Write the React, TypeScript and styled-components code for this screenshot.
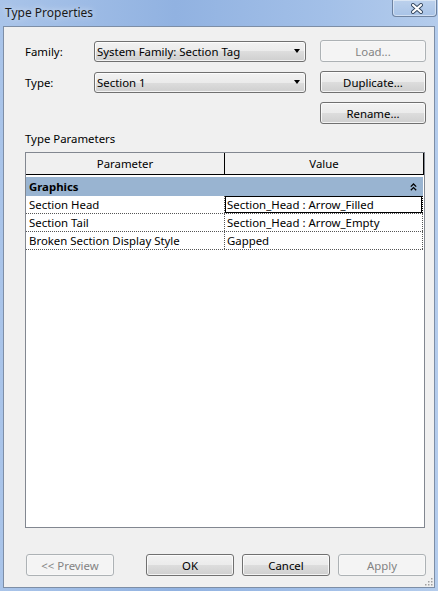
import React from "react";
import styled, { createGlobalStyle } from "styled-components";

const Global = createGlobalStyle`
  html, body { margin: 0; padding: 0; }
  body {
    width: 438px; height: 591px; overflow: hidden;
    font-family: "Noto Sans", "Open Sans", sans-serif;
    font-size: 11.4px; color: #000;
  }
  * { box-sizing: border-box; }
`;

const Window = styled.div`
  width: 438px; height: 591px;
  display: flex; flex-direction: column;
  background: linear-gradient(90deg, #a9c4e9 0%, #91b2e1 40%, #a3c0e8 75%, #b4ccec 100%);
`;

const TitleBar = styled.div`
  height: 26px; flex: none;
  display: flex; align-items: flex-start;
`;

const Title = styled.div`
  padding: 5px 0 0 5px;
  font-size: 12px; line-height: 16px; color: #1a1a1a;
  text-shadow: 0 0 6px rgba(255, 255, 255, 0.8);
`;

const CloseButton = styled.div`
  margin-left: auto; margin-right: 1px;
  width: 45px; height: 17px;
  border: 1px solid rgba(50, 70, 100, 0.55); border-top: none;
  border-radius: 0 0 4px 4px;
  box-shadow: inset 0 0 0 1px rgba(255, 255, 255, 0.45);
  background: linear-gradient(#bcd1ec, #a8c3e7);
  display: flex; align-items: center; justify-content: center;
  padding-left: 4px;
`;

const Body = styled.div`
  flex: 1;
  margin: 0 3px 3px 3px;
  border: 1px solid #7d8ea6;
  background: #f0f0f0;
  display: flex; flex-direction: column;
  padding: 13px 8px 11px 21px;
  position: relative;
`;

const FieldRow = styled.div<{ $gap?: number }>`
  display: flex; align-items: center;
  height: 22px;
  margin-top: ${(p) => p.$gap ?? 0}px;
`;

const Label = styled.div`
  width: 69px; flex: none;
`;

const Select = styled.div`
  width: 212px; height: 21px; flex: none;
  border: 1px solid #707070; border-radius: 3px;
  background: linear-gradient(#f2f2f2 0%, #ebebeb 50%, #dddddd 50%, #cfcfcf 100%);
  box-shadow: inset 0 0 0 1px rgba(255, 255, 255, 0.75);
  display: flex; align-items: center;
  padding: 0 5px 0 2px;
`;

const SelectText = styled.span`
  flex: 1; white-space: nowrap;
`;

const Arrow = styled.span`
  width: 0; height: 0;
  border-left: 3.5px solid transparent;
  border-right: 3.5px solid transparent;
  border-top: 4px solid #000;
`;

const Button = styled.div<{ $disabled?: boolean; $w?: number; $ml?: string }>`
  width: ${(p) => p.$w ?? 106}px; height: 22px; flex: none;
  margin-left: ${(p) => p.$ml ?? "0"};
  border-radius: 3px;
  display: flex; align-items: center; justify-content: center;
  border: 1px solid ${(p) => (p.$disabled ? "#adb2b5" : "#707070")};
  color: ${(p) => (p.$disabled ? "#838383" : "#000")};
  background: ${(p) =>
    p.$disabled
      ? "#f4f4f4"
      : "linear-gradient(#f2f2f2 0%, #ebebeb 50%, #dddddd 50%, #cfcfcf 100%)"};
  box-shadow: inset 0 0 0 1px ${(p) => (p.$disabled ? "#f8f8f8" : "rgba(255,255,255,0.75)")};
`;

const SectionLabel = styled.div`
  margin-top: 7px; margin-bottom: 5px;
  line-height: 16px;
`;

const Grid = styled.div`
  flex: 1;
  margin-right: 1px;
  border: 1px solid #828790;
  background: #fff;
  display: flex; flex-direction: column;
`;

const HeaderRow = styled.div`
  display: flex; height: 22px;
  background: #f0f0f0;
  border-bottom: 1px solid #000;
`;

const HeaderCell = styled.div<{ $w?: number }>`
  ${(p) => (p.$w ? `width: ${p.$w}px; flex: none;` : "flex: 1;")}
  border-right: 1px solid #000;
  display: flex; align-items: center; justify-content: center;
`;

const GroupRow = styled.div`
  margin-top: 2px; margin-right: 1px;
  height: 19px;
  background: #99b4d1;
  display: flex; align-items: center;
  padding: 0 6px 0 3px;
  font-weight: bold;
`;

const GroupName = styled.span`
  flex: 1;
`;

const DataRow = styled.div`
  display: flex; height: 18px;
  margin-right: 1px;
  border-bottom: 1px dotted #555;
`;

const ParamCell = styled.div`
  width: 199px; flex: none;
  border-right: 1px dotted #555;
  padding-left: 3px;
  display: flex; align-items: center;
  white-space: nowrap;
`;

const ValueCell = styled.div<{ $selected?: boolean }>`
  flex: 1;
  border-right: 1px dotted #555;
  padding-left: 2px;
  display: flex; align-items: center;
  white-space: nowrap;
  ${(p) => (p.$selected ? "box-shadow: inset 0 0 0 1px #000; border-right-color: #000;" : "")}
`;

const Footer = styled.div`
  display: flex; gap: 8px;
  margin-top: 26px;
`;

const Grip = styled.svg`
  position: absolute; right: 1px; bottom: 1px;
`;

const rows = [
  { name: "Section Head", value: "Section_Head : Arrow_Filled", selected: true },
  { name: "Section Tail", value: "Section_Head : Arrow_Empty" },
  { name: "Broken Section Display Style", value: "Gapped" },
];

const CloseIcon = () => (
  <svg width="12" height="11" viewBox="0 0 12 11">
    <path d="M2 2 L10 9 M10 2 L2 9" stroke="#34465e" strokeWidth="4" strokeLinecap="round" fill="none" />
    <path d="M2 2 L10 9 M10 2 L2 9" stroke="#ffffff" strokeWidth="2.2" strokeLinecap="round" fill="none" />
  </svg>
);

const CollapseIcon = () => (
  <svg width="7" height="8" viewBox="0 0 7 8">
    <path d="M0.8 3.6 L3.5 1 L6.2 3.6 M0.8 7.2 L3.5 4.6 L6.2 7.2" stroke="#000" strokeWidth="1.3" fill="none" />
  </svg>
);

export default function App() {
  return (
    <>
      <Global />
      <Window>
        <TitleBar>
          <Title>Type Properties</Title>
          <CloseButton>
            <CloseIcon />
          </CloseButton>
        </TitleBar>
        <Body>
          <FieldRow>
            <Label>Family:</Label>
            <Select>
              <SelectText>System Family: Section Tag</SelectText>
              <Arrow />
            </Select>
            <Button $disabled $ml="14px">Load...</Button>
          </FieldRow>
          <FieldRow $gap={9}>
            <Label>Type:</Label>
            <Select>
              <SelectText>Section 1</SelectText>
              <Arrow />
            </Select>
            <Button $ml="14px">Duplicate...</Button>
          </FieldRow>
          <FieldRow $gap={9}>
            <Button $ml="295px">Rename...</Button>
          </FieldRow>
          <SectionLabel>Type Parameters</SectionLabel>
          <Grid>
            <HeaderRow>
              <HeaderCell $w={199}>Parameter</HeaderCell>
              <HeaderCell>Value</HeaderCell>
            </HeaderRow>
            <GroupRow>
              <GroupName>Graphics</GroupName>
              <CollapseIcon />
            </GroupRow>
            {rows.map((r) => (
              <DataRow key={r.name}>
                <ParamCell>{r.name}</ParamCell>
                <ValueCell $selected={r.selected}>{r.value}</ValueCell>
              </DataRow>
            ))}
          </Grid>
          <Footer>
            <Button $disabled $w={88} $ml="1px">&lt;&lt; Preview</Button>
            <Button $w={88} $ml="auto">OK</Button>
            <Button $w={88}>Cancel</Button>
            <Button $disabled $w={88}>Apply</Button>
          </Footer>
          <Grip width="10" height="10" viewBox="0 0 10 10">
            {[
              [8, 2], [8, 5], [5, 5], [8, 8], [5, 8], [2, 8],
            ].map(([x, y]) => (
              <rect key={`${x}-${y}`} x={x} y={y} width="1.5" height="1.5" fill="#a0a0a0" />
            ))}
          </Grip>
        </Body>
      </Window>
    </>
  );
}
